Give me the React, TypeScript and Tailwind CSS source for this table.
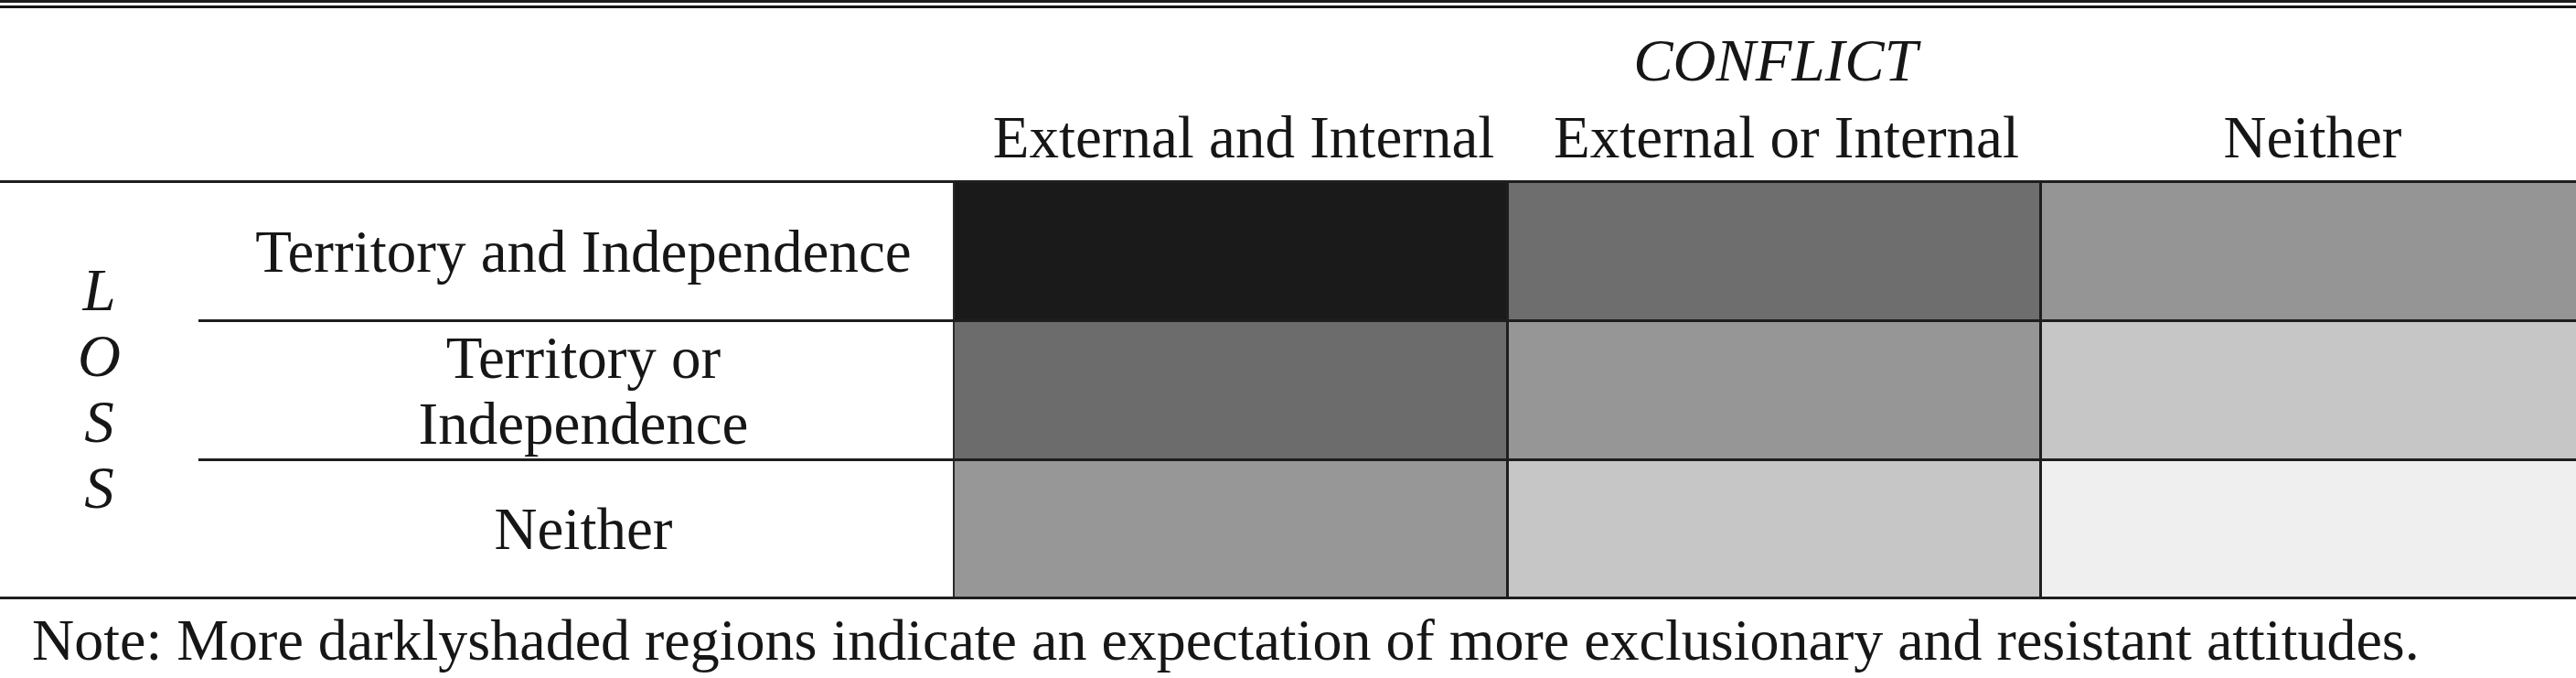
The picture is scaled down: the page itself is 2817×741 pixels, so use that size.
import React from "react";

const serif = { fontFamily: '"Liberation Serif", "Times New Roman", serif' };

const cells = [
  ["bg-[#1a1a1a]", "bg-[#6e6e6e]", "bg-[#959595]"],
  ["bg-[#6c6c6c]", "bg-[#969696]", "bg-[#c6c6c6]"],
  ["bg-[#979797]", "bg-[#c6c6c6]", "bg-[#efefef]"],
];

function Row({ label, shades, h }: { label: React.ReactNode; shades: string[]; h: string }) {
  return (
    <div className={`flex ${h}`}>
      <div className="w-[825px] pl-[17px] flex items-center justify-center text-center">{label}</div>
      <div className={`w-[605px] border-l-2 border-[#2a2a2a] ${shades[0]}`} />
      <div className="w-[3px] bg-[#1e1e1e]" />
      <div className={`w-[580px] ${shades[1]}`} />
      <div className="w-[3px] bg-[#1e1e1e]" />
      <div className={`flex-1 ${shades[2]}`} />
    </div>
  );
}

export default function App() {
  return (
    <div
      className="w-[2817px] h-[741px] bg-white text-[#161616] text-[65px] leading-[72px] overflow-hidden"
      style={serif}
    >
      {/* top double rule */}
      <div className="h-[3px] bg-[#1c1c1c]" />
      <div className="h-[3px] bg-white" />
      <div className="h-[3px] bg-[#141414]" />

      {/* header */}
      <div className="h-[188px] pt-[21px] flex flex-col gap-[12px]">
        <div className="flex">
          <div className="w-[1042px]" />
          <div className="w-[608px]" />
          <div className="w-[583px] text-center italic">CONFLICT</div>
          <div className="flex-1" />
        </div>
        <div className="flex">
          <div className="w-[1042px]" />
          <div className="w-[608px] pl-[28px] text-center whitespace-nowrap">External and Internal</div>
          <div className="w-[583px] pl-[24px] text-center whitespace-nowrap">External or Internal</div>
          <div className="flex-1 pl-[8px] text-center">Neither</div>
        </div>
      </div>
      <div className="h-[3px] bg-[#1e1e1e]" />

      {/* body */}
      <div className="flex h-[452px]">
        <div className="w-[217px] flex flex-col items-center justify-center italic pb-[2px]">
          <span>L</span>
          <span>O</span>
          <span>S</span>
          <span>S</span>
        </div>
        <div className="flex-1 flex flex-col">
          <Row label="Territory and Independence" shades={cells[0]} h="h-[149px]" />
          <div className="h-[3px] bg-[#1e1e1e]" />
          <Row
            label={
              <span>
                Territory or
                <br />
                Independence
              </span>
            }
            shades={cells[1]}
            h="h-[149px]"
          />
          <div className="h-[3px] bg-[#1e1e1e]" />
          <Row label="Neither" shades={cells[2]} h="h-[148px]" />
        </div>
      </div>
      <div className="h-[3px] bg-[#1e1e1e]" />

      {/* note */}
      <div className="mt-[9px] pl-[35px] whitespace-nowrap text-[64px]">
        Note: More darklyshaded regions indicate an expectation of more exclusionary and resistant attitudes.
      </div>
    </div>
  );
}
